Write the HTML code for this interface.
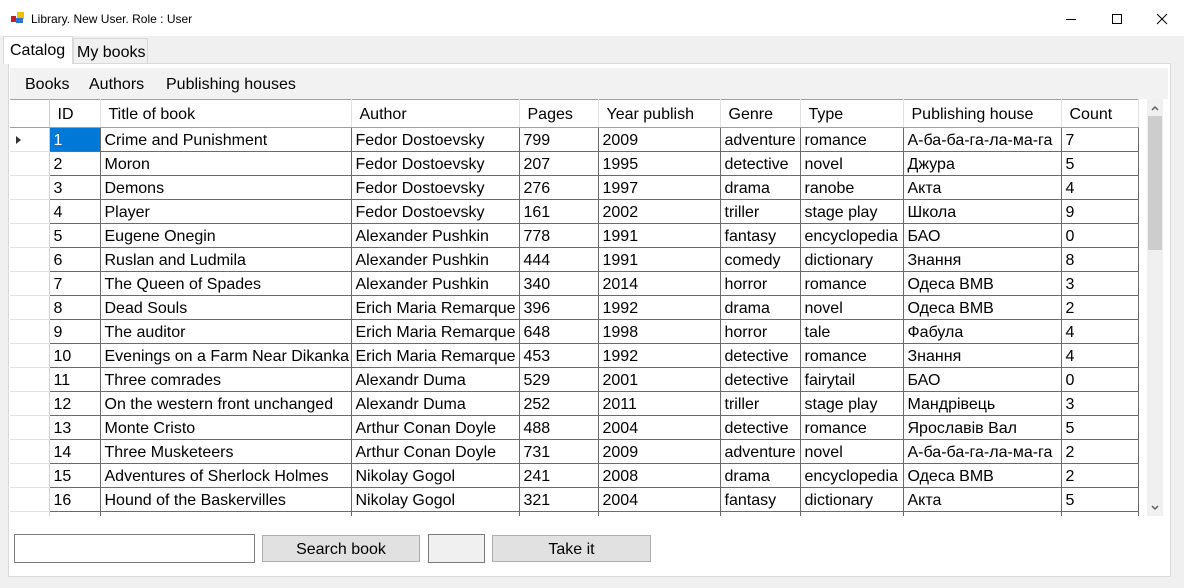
<!DOCTYPE html>
<html><head><meta charset="utf-8"><style>
*{margin:0;padding:0;box-sizing:border-box}
body{width:1184px;height:588px;overflow:hidden;background:#f0f0f0;font-family:"Liberation Sans",Arial,sans-serif;color:#000;position:relative}
.a{position:absolute}
#title{left:0;top:0;width:1184px;height:36px;background:#fff}
#title span{position:absolute;left:31px;top:12px;font-size:12px}
.tab{font-size:16px;position:absolute}
#page{left:8px;top:63px;width:1163px;height:514px;background:#fff;border:1px solid #d9d9d9}
#menu{left:10px;top:68px;width:1158px;height:31px;background:#f2f2f2;font-size:16px}
#menu span{position:absolute;top:8px}
table{position:absolute;left:10px;top:99px;border-collapse:collapse;table-layout:fixed;font-size:16px}
td,th{height:24px;border:1px solid #6b6b6b;padding:2px 0 0 4px;white-space:nowrap;overflow:hidden;text-align:left;font-weight:normal;line-height:20px}
th{height:28px;border:none;border-right:1px solid #e3e3e3;border-top:1px solid #a0a0a0;border-bottom:1px solid #a0a0a0;padding-left:8px;padding-top:3px}
td.h,th.h{border-left:none;border-right:1px solid #d0d0d0;border-top:1px solid #e3e3e3;border-bottom:1px solid #e3e3e3;padding:0}
th.h{border-top:1px solid #a0a0a0;border-bottom:1px solid #a0a0a0}
td.sel{background:#0078d7;color:#fff}
.btn{position:absolute;background:#e1e1e1;border:1px solid #adadad;font-size:16px;text-align:center;line-height:27px}
</style></head><body>
<div class="a" style="left:0;top:0;width:1184px;height:4px;background:#e8e8e8"></div>
<div id="title" class="a">
<svg class="a" style="left:11px;top:12px" width="14" height="12"><rect x="0" y="4" width="5" height="6" fill="#c02020"/><rect x="6" y="0" width="7" height="7" fill="#f0c000"/><rect x="5" y="6" width="7" height="5" fill="#3070d0"/></svg>
<span>Library. New User. Role : User</span>
<svg class="a" style="left:1060px;top:8px" width="110" height="22" stroke="#000" fill="none" stroke-width="1"><line x1="6" y1="11.5" x2="16" y2="11.5"/><rect x="52.5" y="6.5" width="9" height="9"/><line x1="97" y1="6" x2="107" y2="16"/><line x1="107" y1="6" x2="97" y2="16"/></svg>
</div>
<div id="page" class="a"></div>
<div class="a" style="left:3px;top:36px;width:70px;height:28px;background:#fff;border:1px solid #d9d9d9;border-bottom:none"></div>
<div class="tab" style="left:10px;top:42px">Catalog</div>
<div class="a" style="left:73px;top:38px;width:75px;height:25px;background:#f0f0f0;border:1px solid #d9d9d9;border-bottom:none"></div>
<div class="tab" style="left:77px;top:44px">My books</div>
<div id="menu" class="a"><span style="left:15px">Books</span><span style="left:79px">Authors</span><span style="left:156px">Publishing houses</span></div>
<table>
<colgroup><col style="width:39px"><col style="width:51px"><col style="width:251px"><col style="width:168px"><col style="width:79px"><col style="width:122px"><col style="width:80px"><col style="width:103px"><col style="width:158px"><col style="width:77px"></colgroup>
<tr><th class="h"></th><th>ID</th><th>Title of book</th><th>Author</th><th>Pages</th><th>Year publish</th><th>Genre</th><th>Type</th><th>Publishing house</th><th>Count</th></tr>
<tr><td class="h"><svg width="14" height="10" style="margin-left:5px;margin-top:0;display:block"><path d="M1 1 L6 5 L1 9Z" fill="#333"/></svg></td><td class="sel">1</td><td>Crime and Punishment</td><td>Fedor Dostoevsky</td><td>799</td><td>2009</td><td>adventure</td><td>romance</td><td>А-ба-ба-га-ла-ма-га</td><td>7</td></tr>
<tr><td class="h"></td><td>2</td><td>Moron</td><td>Fedor Dostoevsky</td><td>207</td><td>1995</td><td>detective</td><td>novel</td><td>Джура</td><td>5</td></tr>
<tr><td class="h"></td><td>3</td><td>Demons</td><td>Fedor Dostoevsky</td><td>276</td><td>1997</td><td>drama</td><td>ranobe</td><td>Акта</td><td>4</td></tr>
<tr><td class="h"></td><td>4</td><td>Player</td><td>Fedor Dostoevsky</td><td>161</td><td>2002</td><td>triller</td><td>stage play</td><td>Школа</td><td>9</td></tr>
<tr><td class="h"></td><td>5</td><td>Eugene Onegin</td><td>Alexander Pushkin</td><td>778</td><td>1991</td><td>fantasy</td><td>encyclopedia</td><td>БАО</td><td>0</td></tr>
<tr><td class="h"></td><td>6</td><td>Ruslan and Ludmila</td><td>Alexander Pushkin</td><td>444</td><td>1991</td><td>comedy</td><td>dictionary</td><td>Знання</td><td>8</td></tr>
<tr><td class="h"></td><td>7</td><td>The Queen of Spades</td><td>Alexander Pushkin</td><td>340</td><td>2014</td><td>horror</td><td>romance</td><td>Одеса ВМВ</td><td>3</td></tr>
<tr><td class="h"></td><td>8</td><td>Dead Souls</td><td>Erich Maria Remarque</td><td>396</td><td>1992</td><td>drama</td><td>novel</td><td>Одеса ВМВ</td><td>2</td></tr>
<tr><td class="h"></td><td>9</td><td>The auditor</td><td>Erich Maria Remarque</td><td>648</td><td>1998</td><td>horror</td><td>tale</td><td>Фабула</td><td>4</td></tr>
<tr><td class="h"></td><td>10</td><td>Evenings on a Farm Near Dikanka</td><td>Erich Maria Remarque</td><td>453</td><td>1992</td><td>detective</td><td>romance</td><td>Знання</td><td>4</td></tr>
<tr><td class="h"></td><td>11</td><td>Three comrades</td><td>Alexandr Duma</td><td>529</td><td>2001</td><td>detective</td><td>fairytail</td><td>БАО</td><td>0</td></tr>
<tr><td class="h"></td><td>12</td><td>On the western front unchanged</td><td>Alexandr Duma</td><td>252</td><td>2011</td><td>triller</td><td>stage play</td><td>Мандрівець</td><td>3</td></tr>
<tr><td class="h"></td><td>13</td><td>Monte Cristo</td><td>Arthur Conan Doyle</td><td>488</td><td>2004</td><td>detective</td><td>romance</td><td>Ярославів Вал</td><td>5</td></tr>
<tr><td class="h"></td><td>14</td><td>Three Musketeers</td><td>Arthur Conan Doyle</td><td>731</td><td>2009</td><td>adventure</td><td>novel</td><td>А-ба-ба-га-ла-ма-га</td><td>2</td></tr>
<tr><td class="h"></td><td>15</td><td>Adventures of Sherlock Holmes</td><td>Nikolay Gogol</td><td>241</td><td>2008</td><td>drama</td><td>encyclopedia</td><td>Одеса ВМВ</td><td>2</td></tr>
<tr><td class="h"></td><td>16</td><td>Hound of the Baskervilles</td><td>Nikolay Gogol</td><td>321</td><td>2004</td><td>fantasy</td><td>dictionary</td><td>Акта</td><td>5</td></tr>
<tr><td class="h"></td><td></td><td></td><td></td><td></td><td></td><td></td><td></td><td></td><td></td></tr>
</table>
<div class="a" style="left:9px;top:516px;width:1160px;height:60px;background:#fff"></div>
<div class="a" style="left:1147px;top:99px;width:16px;height:417px;background:#f0f0f0"></div>
<div class="a" style="left:1148px;top:116px;width:14px;height:134px;background:#cdcdcd"></div>
<svg class="a" style="left:1147px;top:100px" width="16" height="416" fill="none" stroke="#606060" stroke-width="1.5"><path d="M5 10 L8 7 L11 10"/><path d="M5 406 L8 409 L11 406"/></svg>
<div class="a" style="left:14px;top:534px;width:241px;height:29px;background:#fff;border:1px solid #7a7a7a"></div>
<div class="btn" style="left:262px;top:535px;width:158px;height:27px">Search book</div>
<div class="a" style="left:428px;top:534px;width:57px;height:29px;background:#f0f0f0;border:1px solid #7a7a7a"></div>
<div class="btn" style="left:492px;top:535px;width:159px;height:27px">Take it</div>
</body></html>
